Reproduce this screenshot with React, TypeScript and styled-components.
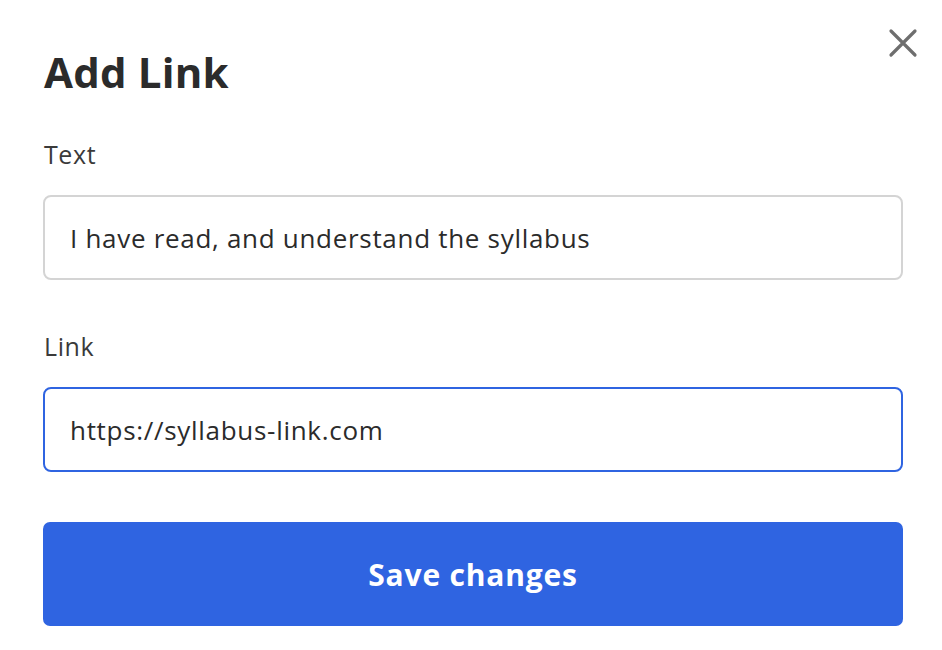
import React from "react";
import styled, { createGlobalStyle } from "styled-components";

const Global = createGlobalStyle`
  html, body { margin: 0; padding: 0; background: #ffffff; }
  body { font-family: "Open Sans", "Noto Sans", sans-serif; color: #2b2b2b; }
  * { box-sizing: border-box; }
`;

const Dialog = styled.div`
  position: relative;
  width: 942px;
  height: 650px;
  padding: 44px 39px 0 43px;
  display: flex;
  flex-direction: column;
`;

const Title = styled.h1`
  margin: 0 0 38px 1px;
  font-size: 42px;
  line-height: 56px;
  font-weight: 700;
  color: #2b2b2b;
  letter-spacing: 0.2px;
`;

const CloseButton = styled.button`
  position: absolute;
  top: 26px;
  right: 22px;
  width: 34px;
  height: 34px;
  padding: 0;
  border: none;
  background: transparent;
  display: flex;
  align-items: center;
  justify-content: center;
  cursor: pointer;
`;

const Field = styled.div`
  display: flex;
  flex-direction: column;
  margin-bottom: 50px;
`;

const Label = styled.label`
  font-size: 25px;
  line-height: 32px;
  letter-spacing: 0.6px;
  color: #3a3a3a;
  margin: 0 0 25px 1px;
`;

const Input = styled.input<{ $focused?: boolean }>`
  width: 860px;
  height: 85px;
  padding: 0 25px;
  border-radius: 8px;
  border: ${(p) => (p.$focused ? "2px solid #2f64e1" : "2px solid #d4d4d4")};
  font-family: "Open Sans", "Noto Sans", sans-serif;
  font-size: 26px;
  letter-spacing: 0.7px;
  color: #2b2b2b;
  outline: none;
  background: #fff;
`;

const SaveButton = styled.button`
  width: 860px;
  height: 104px;
  border: none;
  border-radius: 7px;
  background: #2f64e1;
  color: #ffffff;
  font-family: "Open Sans", "Noto Sans", sans-serif;
  font-size: 30px;
  font-weight: 700;
  letter-spacing: 0.8px;
  cursor: pointer;
`;

export default function App() {
  return (
    <>
      <Global />
      <Dialog>
        <CloseButton aria-label="Close">
          <svg width="30" height="30" viewBox="0 0 30 30">
            <path d="M3 3 L27 27 M27 3 L3 27" stroke="#6e6e6e" strokeWidth="3.2" strokeLinecap="round" />
          </svg>
        </CloseButton>
        <Title>Add Link</Title>
        <Field>
          <Label>Text</Label>
          <Input defaultValue="I have read, and understand the syllabus" />
        </Field>
        <Field>
          <Label>Link</Label>
          <Input $focused defaultValue="https://syllabus-link.com" />
        </Field>
        <SaveButton>Save changes</SaveButton>
      </Dialog>
    </>
  );
}
